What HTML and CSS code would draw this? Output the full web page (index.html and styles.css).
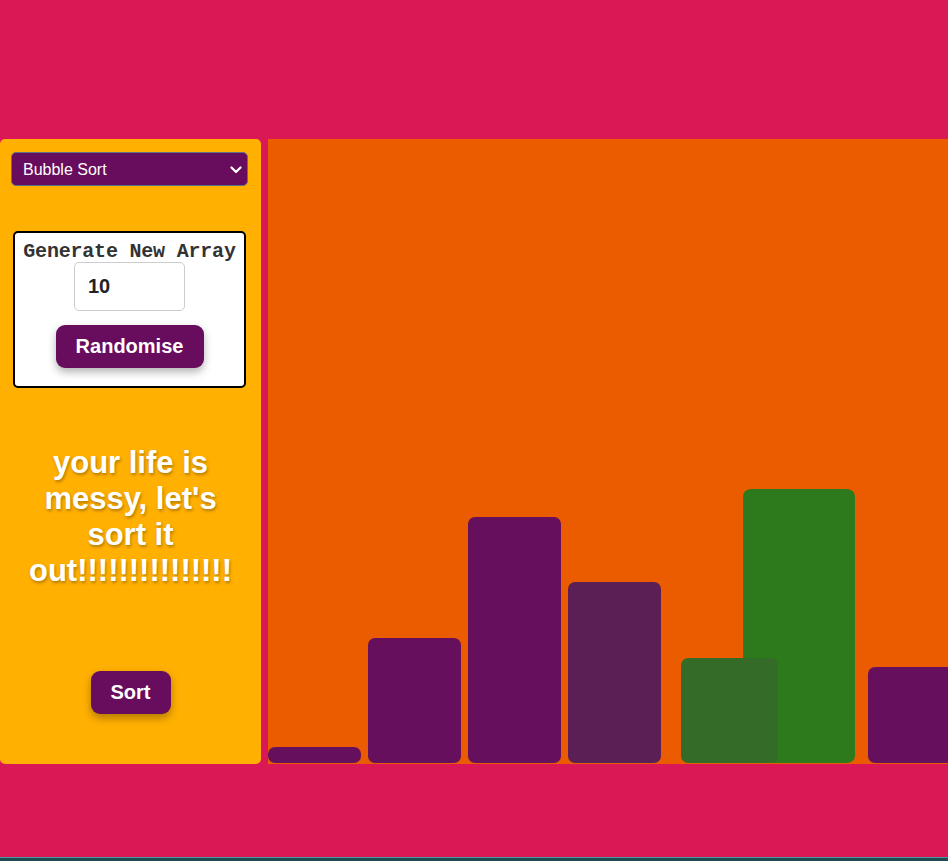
FILE: index.html
```html
<!DOCTYPE html>
<html>
<head>
<meta charset="utf-8">
<link rel="stylesheet" href="styles.css">
</head>
<body>
<div class="page">
  <div class="main">
    <aside class="sidebar">
      <div class="select-wrap">
        <select class="algo">
          <option>Bubble Sort</option>
        </select>
        <svg class="chev" width="12" height="8" viewBox="0 0 12 8"><path d="M1.5 1.5 L6 6 L10.5 1.5" fill="none" stroke="#fff" stroke-width="2.2" stroke-linecap="round" stroke-linejoin="round"/></svg>
      </div>
      <div class="gen-box">
        <div class="gen-title">Generate New Array</div>
        <input class="size-input" type="text" value="10">
        <button class="btn btn-rand">Randomise</button>
      </div>
      <p class="slogan">your life is messy, let's sort it out!!!!!!!!!!!!!!!</p>
      <button class="btn btn-sort">Sort</button>
    </aside>
    <section class="chart">
      <div class="bar" style="height:16px"></div>
      <div class="bar" style="height:125px"></div>
      <div class="bar" style="height:246px"></div>
      <div class="bar bar-dim" style="height:181px"></div>
      <div class="bar bar-green-a" style="height:105px"></div>
      <div class="bar bar-green-b" style="height:274px"></div>
      <div class="bar" style="height:96px"></div>
    </section>
  </div>
  <footer class="footer"></footer>
</div>
</body>
</html>
```
FILE: styles.css
```css
html, body {
  margin: 0;
  padding: 0;
  background: #da1855;
  overflow: hidden;
}
.page {
  width: 948px;
  height: 861px;
  display: flex;
  flex-direction: column;
  font-family: "Liberation Sans", Arial, sans-serif;
}
.main {
  margin-top: 139px;
  height: 625px;
  display: flex;
  gap: 7px;
}
.sidebar {
  width: 261px;
  flex: none;
  background: #ffb000;
  border-radius: 5px;
  display: flex;
  flex-direction: column;
  align-items: center;
  box-sizing: border-box;
}
.select-wrap {
  position: relative;
  margin-top: 13px;
  align-self: flex-start;
  margin-left: 11px;
}
.algo {
  appearance: none;
  -webkit-appearance: none;
  width: 237px;
  height: 34px;
  background: #680d5e;
  color: #fff;
  border: 1px solid #5f6f86;
  border-radius: 5px;
  font-family: "Liberation Sans", Arial, sans-serif;
  font-size: 16px;
  padding: 0 0 0 11px;
  outline: none;
}
.chev {
  position: absolute;
  right: 6px;
  top: 14px;
  pointer-events: none;
}
.gen-box {
  margin-top: 45px;
  width: 233px;
  box-sizing: border-box;
  background: #fff;
  border: 2px solid #000;
  border-radius: 5px;
  display: flex;
  flex-direction: column;
  align-items: center;
  padding: 9px 0 18px;
  align-self: flex-start;
  margin-left: 13px;
}
.gen-title {
  font-family: "Liberation Mono", "Courier New", monospace;
  font-weight: bold;
  font-size: 20px;
  line-height: 20px;
  color: #333;
  white-space: nowrap;
  letter-spacing: -0.2px;
}
.size-input {
  margin-top: 0;
  width: 111px;
  height: 49px;
  box-sizing: border-box;
  border: 1px solid #ccc;
  border-radius: 5px;
  padding: 0 0 0 13px;
  font-family: "Liberation Sans", Arial, sans-serif;
  font-size: 20px;
  font-weight: bold;
  color: #222;
  outline: none;
}
.btn {
  background: #680d5e;
  color: #fff;
  border: none;
  border-radius: 9px;
  font-family: "Liberation Sans", Arial, sans-serif;
  font-weight: bold;
  font-size: 20px;
  height: 43px;
  box-shadow: 0 4px 8px rgba(0, 0, 0, 0.3);
  cursor: pointer;
}
.btn-rand {
  margin-top: 14px;
  width: 148px;
}
.slogan {
  margin: 57px 0 0;
  width: 220px;
  text-align: center;
  color: #fff;
  font-weight: bold;
  font-size: 31px;
  line-height: 36px;
  text-shadow: 1px 2px 3px rgba(120, 80, 0, 0.55);
}
.btn-sort {
  margin-top: 82px;
  width: 80px;
}
.chart {
  flex: 1;
  background: #eb5c00;
  display: flex;
  align-items: flex-end;
  gap: 7px;
  overflow: hidden;
  padding-bottom: 1px;
}
.bar {
  flex: none;
  width: 93px;
  background: #660f5c;
  border-radius: 7px;
}
.bar-dim {
  background: #5c1f55;
}
.bar-green-a {
  background: #346b28;
  position: relative;
  z-index: 2;
  transform-origin: left bottom;
  transform: translateX(13px) scaleX(1.043);
}
.bar-green-b {
  background: #2d7a1d;
  position: relative;
  z-index: 1;
  transform-origin: left bottom;
  transform: translateX(-25px) scaleX(1.204);
}
.footer {
  margin-top: auto;
  height: 3px;
  background: #1e4a50;
  border-top: 1px solid #4a9aa6;
}
```
